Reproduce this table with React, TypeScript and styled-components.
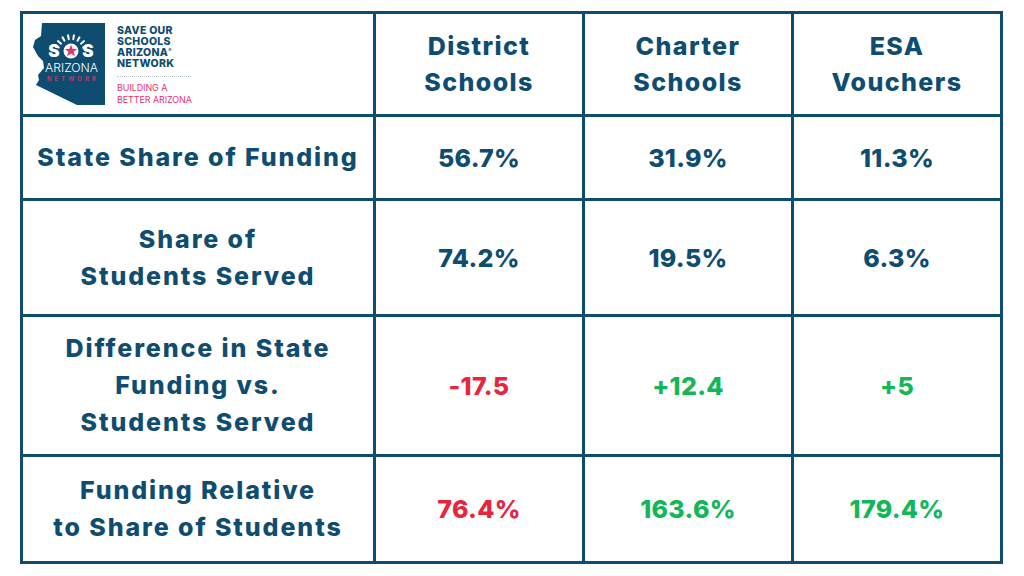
import React from "react";
import styled, { createGlobalStyle } from "styled-components";

const NAVY = "#0f4d70";
const RED = "#e8253e";
const GREEN = "#12b75a";
const PINK = "#e6336f";
const FONT = `"Inter", "Noto Sans", "Liberation Sans", sans-serif`;

type Tone = "neutral" | "bad" | "good";

type Row = {
    label: string[];
    values: { text: string; tone: Tone }[];
};

const ROWS: Row[] = [
    {
        label: ["State Share of Funding"],
        values: [
            { text: "56.7%", tone: "neutral" },
            { text: "31.9%", tone: "neutral" },
            { text: "11.3%", tone: "neutral" },
        ],
    },
    {
        label: ["Share of", "Students Served"],
        values: [
            { text: "74.2%", tone: "neutral" },
            { text: "19.5%", tone: "neutral" },
            { text: "6.3%", tone: "neutral" },
        ],
    },
    {
        label: ["Difference in State", "Funding vs.", "Students Served"],
        values: [
            { text: "-17.5", tone: "bad" },
            { text: "+12.4", tone: "good" },
            { text: "+5", tone: "good" },
        ],
    },
    {
        label: ["Funding Relative", "to Share of Students"],
        values: [
            { text: "76.4%", tone: "bad" },
            { text: "163.6%", tone: "good" },
            { text: "179.4%", tone: "good" },
        ],
    },
];

const HEADERS = [
    ["District", "Schools"],
    ["Charter", "Schools"],
    ["ESA", "Vouchers"],
];

const toneColor = (tone: Tone) => (tone === "bad" ? RED : tone === "good" ? GREEN : NAVY);

function StateMark() {
    const rays = [-70, -50, -30, -10, 10, 30, 50, 70];
    return (
        <StateSvg viewBox="0 0 72 82" width={72} height={82}>
            <path d="M9 0 H72 V82 H44 L3 62 L6 57 L5 52 L11 45 L10 38 L5 33 L0 24 L2 17 L8 13 Z" fill={NAVY} />
            {rays.map((a) => {
                const r = (a * Math.PI) / 180;
                const cx = 38;
                const cy = 29;
                return (
                    <line
                        key={a}
                        x1={cx + Math.sin(r) * 13}
                        y1={cy - Math.cos(r) * 13}
                        x2={cx + Math.sin(r) * 17}
                        y2={cy - Math.cos(r) * 17}
                        stroke="#fff"
                        strokeWidth={2}
                        strokeLinecap="round"
                    />
                );
            })}
            <text x={21} y={33.5} fill="#fff" fontFamily={FONT} fontWeight={900} fontSize={17} textAnchor="middle">S</text>
            <circle cx={38} cy={28} r={7.5} fill="#fff" />
            <polygon
                points="38,21.8 39.7,26.1 44.2,26.1 40.6,28.8 41.9,33.2 38,30.5 34.1,33.2 35.4,28.8 31.8,26.1 36.3,26.1"
                fill={PINK}
            />
            <text x={55} y={33.5} fill="#fff" fontFamily={FONT} fontWeight={900} fontSize={17} textAnchor="middle">S</text>
            <text x={12} y={48.5} fill="#fff" fontFamily={FONT} fontWeight={300} fontSize={11} textLength={53} lengthAdjust="spacingAndGlyphs">ARIZONA</text>
            <text x={14} y={57.5} fill={PINK} fontFamily={FONT} fontWeight={500} fontSize={6} textLength={49}>NETWORK</text>
        </StateSvg>
    );
}

export default function App() {
    return (
        <Page>
            <GlobalStyle />
            <Table>
                <LogoCell>
                    <StateMark />
                    <LogoText>
                        <LogoName>
                            SAVE OUR
                            <br />
                            SCHOOLS
                            <br />
                            ARIZONA<sup>®</sup>
                            <br />
                            NETWORK
                        </LogoName>
                        <LogoRule />
                        <LogoTagline>
                            BUILDING A
                            <br />
                            BETTER ARIZONA
                        </LogoTagline>
                    </LogoText>
                </LogoCell>
                {HEADERS.map((lines) => (
                    <HeaderCell key={lines.join(" ")}>
                        {lines.map((l) => (
                            <Line key={l}>{l}</Line>
                        ))}
                    </HeaderCell>
                ))}
                {ROWS.map((row) => (
                    <React.Fragment key={row.label.join(" ")}>
                        <LabelCell>
                            {row.label.map((l) => (
                                <Line key={l}>{l}</Line>
                            ))}
                        </LabelCell>
                        {row.values.map((v, i) => (
                            <ValueCell key={i} tone={v.tone}>
                                {v.text}
                            </ValueCell>
                        ))}
                    </React.Fragment>
                ))}
            </Table>
        </Page>
    );
}

const GlobalStyle = createGlobalStyle`
    html, body {
        margin: 0;
        padding: 0;
        background: #ffffff;
    }
    body {
        font-family: ${FONT};
    }
`;

const Page = styled.div`
    width: 1024px;
    height: 576px;
    box-sizing: border-box;
    padding: 11px 0 0 20px;
    background: #ffffff;
`;

const Table = styled.div`
    display: grid;
    width: 983px;
    height: 553px;
    box-sizing: border-box;
    padding: 3px;
    gap: 3px;
    grid-template-columns: 350px repeat(3, 206px);
    grid-template-rows: 100px 81px 113px 137px 104px;
    background: ${NAVY};
`;

const Cell = styled.div`
    background: #ffffff;
    display: flex;
    flex-direction: column;
    align-items: center;
    justify-content: center;
    text-align: center;
    font-family: ${FONT};
    font-weight: 800;
    color: ${NAVY};
`;

const HeaderCell = styled(Cell)`
    font-size: 25px;
    line-height: 36px;
    letter-spacing: 1.4px;
`;

const LabelCell = styled(Cell)`
    font-size: 25px;
    line-height: 37px;
    letter-spacing: 1.9px;
`;

const ValueCell = styled(Cell)<{ tone: Tone }>`
    font-size: 25px;
    letter-spacing: 0.3px;
    color: ${({ tone }) => toneColor(tone)};
`;

const Line = styled.span`
    display: block;
    white-space: nowrap;
`;

const LogoCell = styled(Cell)`
    flex-direction: row;
    justify-content: flex-start;
    align-items: center;
    padding-left: 10px;
    gap: 12px;
`;

const StateSvg = styled.svg`
    display: block;
    flex: none;
`;

const LogoText = styled.div`
    display: flex;
    flex-direction: column;
    align-items: flex-start;
    text-align: left;
    padding-top: 2px;
`;

const LogoName = styled.div`
    font-size: 10.5px;
    line-height: 11px;
    font-weight: 800;
    letter-spacing: 0.3px;
    color: ${NAVY};

    sup {
        font-size: 5px;
        line-height: 0;
        vertical-align: 4px;
    }
`;

const LogoRule = styled.div`
    width: 74px;
    height: 0;
    margin: 7px 0 5px;
    border-top: 1px dotted #b9c8d3;
`;

const LogoTagline = styled.div`
    font-size: 9px;
    line-height: 12px;
    font-weight: 400;
    letter-spacing: -0.1px;
    color: ${PINK};
`;
